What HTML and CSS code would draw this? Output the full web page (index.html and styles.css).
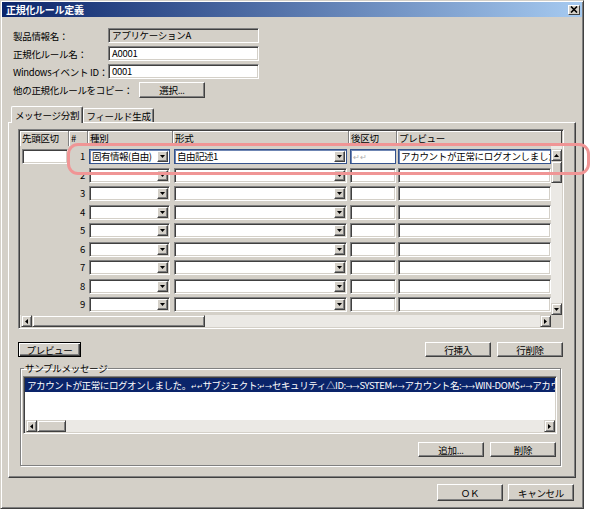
FILE: index.html
```html
<!DOCTYPE html>
<html lang="ja">
<head>
<meta charset="utf-8">
<title>正規化ルール定義</title>
<link rel="stylesheet" href="styles.css">
</head>
<body>
<div class="dialog">
  <div class="titlebar">
    <span class="title">正規化ルール定義</span>
    <span class="close-btn"><svg width="8" height="7" viewBox="0 0 8 7"><path d="M1 0.5l6 6M7 0.5l-6 6" stroke="#000" stroke-width="1.6" fill="none"/></svg></span>
  </div>
  <div class="content">
    <div class="form">
      <div class="frow"><span class="flabel">製品情報名：</span><div class="field sunken disabled">アプリケーションA</div></div>
      <div class="frow"><span class="flabel">正規化ルール名：</span><div class="field sunken">A0001</div></div>
      <div class="frow"><span class="flabel">Windowsイベント ID：</span><div class="field sunken">0001</div></div>
      <div class="frow"><span class="flabel wide">他の正規化ルールをコピー：</span><div class="btn sel-btn">選択...</div></div>
    </div>
    <div class="tabs">
      <div class="tab active">メッセージ分割</div>
      <div class="tab second">フィールド生成</div>
    </div>
    <div class="panel">
      <div class="grid-box sunken">
        <div class="grid-head">
          <div class="hcell">先頭区切</div>
          <div class="hcell">#</div>
          <div class="hcell">種別</div>
          <div class="hcell">形式</div>
          <div class="hcell">後区切</div>
          <div class="hcell last">プレビュー</div>
        </div>
        <div class="grid-main">
          <div class="rows">
            <div class="grow">
              <div class="c0"><div class="gin sunken w46"></div></div>
              <div class="num">1</div>
              <div class="c"><div class="combo sel w81"><span class="ctext">固有情報(自由)</span><span class="dd"><svg width="5" height="3" viewBox="0 0 5 3"><path d="M0 0h5L2.5 3z"/></svg></span></div></div>
              <div class="c"><div class="combo sel w173"><span class="ctext">自由記述1</span><span class="dd"><svg width="5" height="3" viewBox="0 0 5 3"><path d="M0 0h5L2.5 3z"/></svg></span></div></div>
              <div class="c"><div class="gin sel w46"><span class="ghost">↵↵</span></div></div>
              <div class="c"><div class="gin sel w153">アカウントが正常にログオンしました</div></div>
            </div>
            <div class="grow">
              <div class="c0"></div>
              <div class="num">2</div>
              <div class="c"><div class="combo sunken w81"><span class="ctext"></span><span class="dd"><svg width="5" height="3" viewBox="0 0 5 3"><path d="M0 0h5L2.5 3z"/></svg></span></div></div>
              <div class="c"><div class="combo sunken w173"><span class="ctext"></span><span class="dd"><svg width="5" height="3" viewBox="0 0 5 3"><path d="M0 0h5L2.5 3z"/></svg></span></div></div>
              <div class="c"><div class="gin sunken w46"></div></div>
              <div class="c"><div class="gin sunken w153"></div></div>
            </div>
            <div class="grow">
              <div class="c0"></div>
              <div class="num">3</div>
              <div class="c"><div class="combo sunken w81"><span class="ctext"></span><span class="dd"><svg width="5" height="3" viewBox="0 0 5 3"><path d="M0 0h5L2.5 3z"/></svg></span></div></div>
              <div class="c"><div class="combo sunken w173"><span class="ctext"></span><span class="dd"><svg width="5" height="3" viewBox="0 0 5 3"><path d="M0 0h5L2.5 3z"/></svg></span></div></div>
              <div class="c"><div class="gin sunken w46"></div></div>
              <div class="c"><div class="gin sunken w153"></div></div>
            </div>
            <div class="grow">
              <div class="c0"></div>
              <div class="num">4</div>
              <div class="c"><div class="combo sunken w81"><span class="ctext"></span><span class="dd"><svg width="5" height="3" viewBox="0 0 5 3"><path d="M0 0h5L2.5 3z"/></svg></span></div></div>
              <div class="c"><div class="combo sunken w173"><span class="ctext"></span><span class="dd"><svg width="5" height="3" viewBox="0 0 5 3"><path d="M0 0h5L2.5 3z"/></svg></span></div></div>
              <div class="c"><div class="gin sunken w46"></div></div>
              <div class="c"><div class="gin sunken w153"></div></div>
            </div>
            <div class="grow">
              <div class="c0"></div>
              <div class="num">5</div>
              <div class="c"><div class="combo sunken w81"><span class="ctext"></span><span class="dd"><svg width="5" height="3" viewBox="0 0 5 3"><path d="M0 0h5L2.5 3z"/></svg></span></div></div>
              <div class="c"><div class="combo sunken w173"><span class="ctext"></span><span class="dd"><svg width="5" height="3" viewBox="0 0 5 3"><path d="M0 0h5L2.5 3z"/></svg></span></div></div>
              <div class="c"><div class="gin sunken w46"></div></div>
              <div class="c"><div class="gin sunken w153"></div></div>
            </div>
            <div class="grow">
              <div class="c0"></div>
              <div class="num">6</div>
              <div class="c"><div class="combo sunken w81"><span class="ctext"></span><span class="dd"><svg width="5" height="3" viewBox="0 0 5 3"><path d="M0 0h5L2.5 3z"/></svg></span></div></div>
              <div class="c"><div class="combo sunken w173"><span class="ctext"></span><span class="dd"><svg width="5" height="3" viewBox="0 0 5 3"><path d="M0 0h5L2.5 3z"/></svg></span></div></div>
              <div class="c"><div class="gin sunken w46"></div></div>
              <div class="c"><div class="gin sunken w153"></div></div>
            </div>
            <div class="grow">
              <div class="c0"></div>
              <div class="num">7</div>
              <div class="c"><div class="combo sunken w81"><span class="ctext"></span><span class="dd"><svg width="5" height="3" viewBox="0 0 5 3"><path d="M0 0h5L2.5 3z"/></svg></span></div></div>
              <div class="c"><div class="combo sunken w173"><span class="ctext"></span><span class="dd"><svg width="5" height="3" viewBox="0 0 5 3"><path d="M0 0h5L2.5 3z"/></svg></span></div></div>
              <div class="c"><div class="gin sunken w46"></div></div>
              <div class="c"><div class="gin sunken w153"></div></div>
            </div>
            <div class="grow">
              <div class="c0"></div>
              <div class="num">8</div>
              <div class="c"><div class="combo sunken w81"><span class="ctext"></span><span class="dd"><svg width="5" height="3" viewBox="0 0 5 3"><path d="M0 0h5L2.5 3z"/></svg></span></div></div>
              <div class="c"><div class="combo sunken w173"><span class="ctext"></span><span class="dd"><svg width="5" height="3" viewBox="0 0 5 3"><path d="M0 0h5L2.5 3z"/></svg></span></div></div>
              <div class="c"><div class="gin sunken w46"></div></div>
              <div class="c"><div class="gin sunken w153"></div></div>
            </div>
            <div class="grow">
              <div class="c0"></div>
              <div class="num">9</div>
              <div class="c"><div class="combo sunken w81"><span class="ctext"></span><span class="dd"><svg width="5" height="3" viewBox="0 0 5 3"><path d="M0 0h5L2.5 3z"/></svg></span></div></div>
              <div class="c"><div class="combo sunken w173"><span class="ctext"></span><span class="dd"><svg width="5" height="3" viewBox="0 0 5 3"><path d="M0 0h5L2.5 3z"/></svg></span></div></div>
              <div class="c"><div class="gin sunken w46"></div></div>
              <div class="c"><div class="gin sunken w153"></div></div>
            </div>
          </div>
          <div class="vscroll">
            <div class="sbtn"><svg width="5" height="3" viewBox="0 0 5 3"><path d="M2.5 0L5 3H0z"/></svg></div>
            <div class="vthumb"></div>
            <div class="track"></div>
            <div class="sbtn"><svg width="5" height="3" viewBox="0 0 5 3"><path d="M0 0h5L2.5 3z"/></svg></div>
          </div>
        </div>
        <div class="hbar">
          <div class="hscroll">
            <div class="sbtn"><svg width="3" height="5" viewBox="0 0 3 5"><path d="M3 0v5L0 2.5z"/></svg></div>
            <div class="hthumb"></div>
            <div class="track"></div>
            <div class="sbtn"><svg width="3" height="5" viewBox="0 0 3 5"><path d="M0 0l3 2.5L0 5z"/></svg></div>
          </div>
          <div class="corner"></div>
        </div>
      </div>

      <div class="btnrow">
        <div class="btn default w63">プレビュー</div>
        <div class="btngroup">
          <div class="btn w66">行挿入</div>
          <div class="btn w66">行削除</div>
        </div>
      </div>

      <fieldset class="group">
        <legend>サンプルメッセージ</legend>
        <div class="listbox sunken">
          <div class="item">アカウントが正常にログオンしました。<span class="sym">↵↵</span>サブジェクト:<span class="sym">↵→</span>セキュリティ△ID:<span class="sym">→→</span>SYSTEM<span class="sym">↵→</span>アカウント名:<span class="sym">→→</span>WIN-DOM$<span class="sym">↵→</span>アカウント</div>
          <div class="lb-blank"></div>
          <div class="lb-hscroll">
            <div class="sbtn"><svg width="3" height="5" viewBox="0 0 3 5"><path d="M3 0v5L0 2.5z"/></svg></div>
            <div class="lthumb"></div>
            <div class="track"></div>
            <div class="sbtn"><svg width="3" height="5" viewBox="0 0 3 5"><path d="M0 0l3 2.5L0 5z"/></svg></div>
          </div>
        </div>
        <div class="btngroup right">
          <div class="btn w66">追加...</div>
          <div class="btn w66">削除</div>
        </div>
      </fieldset>
    </div>
    <div class="footer">
      <div class="btn w66 tall">ＯＫ</div>
      <div class="btn w66 tall">キャンセル</div>
    </div>
  </div>
</div>
<div class="highlight"></div>
</body>
</html>
```

FILE: styles.css
```css
* { box-sizing: border-box; }
html, body { margin: 0; padding: 0; }
body {
  width: 595px;
  height: 512px;
  background: #fff;
  font-family: "Noto Sans CJK JP", "Liberation Sans", sans-serif;
  font-size: 9.5px;
  letter-spacing: -0.3px;
  color: #000;
  position: relative;
  overflow: hidden;
}

.dialog {
  width: 584px;
  height: 509px;
  background: #d4d0c8;
  border: 1px solid;
  border-color: #d4d0c8 #404040 #404040 #d4d0c8;
  box-shadow: inset 1px 1px #fff, inset -1px -1px #808080;
  padding: 1px;
  display: flex;
  flex-direction: column;
}

.titlebar {
  height: 15px;
  flex: none;
  background: linear-gradient(to right, #0a246a, #a6caf0);
  display: flex;
  align-items: center;
  justify-content: space-between;
  padding: 0 2px 0 4px;
}
.title { color: #fff; font-weight: bold; font-size: 10px; letter-spacing: -0.3px; }
.close-btn {
  width: 12px;
  height: 10px;
  background: #d4d0c8;
  border: 1px solid;
  border-color: #fff #404040 #404040 #fff;
  display: flex;
  align-items: center;
  justify-content: center;
}

.sunken {
  border: 1px solid;
  border-color: #808080 #fff #fff #808080;
  box-shadow: inset 1px 1px #404040, inset -1px -1px #d4d0c8;
}

.content { padding: 11px 0 0 6px; }

.form { padding-left: 5px; display: flex; flex-direction: column; gap: 3px; }
.frow { display: flex; align-items: center; height: 15px; }
.flabel { width: 95px; white-space: nowrap; }
.flabel.wide { width: 126px; }
.field {
  width: 151px;
  height: 15px;
  background: #fff;
  padding: 0 3px;
  line-height: 13px;
  white-space: nowrap;
}
.field.disabled { background: #d4d0c8; }

.btn {
  height: 15px;
  background: #d4d0c8;
  border: 1px solid;
  border-color: #fff #404040 #404040 #fff;
  box-shadow: inset -1px -1px #808080;
  display: flex;
  align-items: center;
  justify-content: center;
  white-space: nowrap;
}
.btn.default {
  border-color: #000;
  box-shadow: inset 1px 1px #fff, inset -1px -1px #404040, inset -2px -2px #808080;
}
.sel-btn { width: 66px; height: 16px; }
.w63 { width: 63px; }
.w66 { width: 66px; }
.tall { height: 17px; }

.tabs {
  margin-top: 9px;
  height: 16px;
  display: flex;
  align-items: flex-end;
  padding-left: 3px;
  position: relative;
  z-index: 1;
}
.tab {
  height: 14px;
  background: #d4d0c8;
  border: 1px solid;
  border-color: #fff #404040 transparent #fff;
  border-bottom: none;
  box-shadow: inset -1px 0 #808080;
  display: flex;
  align-items: center;
  justify-content: center;
  width: 71px;
  border-radius: 2px 2px 0 0;
}
.tab.active { height: 17px; width: 72px; margin-bottom: -1px; }

.panel {
  width: 568px;
  height: 356px;
  border: 1px solid;
  border-color: #fff #404040 #404040 #fff;
  box-shadow: inset -1px -1px #808080;
  padding: 6px 0 0 9px;
}

.grid-box {
  width: 546px;
  height: 200px;
  padding: 1px;
  display: flex;
  flex-direction: column;
}
.grid-head {
  height: 15px;
  flex: none;
  display: grid;
  grid-template-columns: 49px 19px 85px 176px 48px 165px;
}
.hcell {
  border-right: 1px solid #808080;
  box-shadow: inset 1px 1px #fff;
  padding-left: 2px;
  line-height: 14px;
  white-space: nowrap;
  overflow: hidden;
}
.hcell.last { border-right: 1px solid #404040; }

.grid-main { height: 169px; flex: none; display: flex; overflow: hidden; }
.rows { width: 531px; padding-top: 2px; }
.grow {
  height: 18.5px;
  display: grid;
  grid-template-columns: 49px 19px 85px 176px 48px 154px;
  align-items: start;
}
.grow > div { padding-top: 1px; }
.c0 { padding-left: 2px; }
.c { padding-left: 1px; }
.num { text-align: right; padding-right: 3px; line-height: 15px; }

.gin {
  height: 15px;
  background: #fff;
  padding: 0 2px;
  line-height: 13px;
  white-space: nowrap;
  overflow: hidden;
}
.w46 { width: 46px; }
.w81 { width: 81px; }
.w153 { width: 153px; }
.w173 { width: 173px; }

.combo {
  height: 15px;
  background: #fff;
  display: flex;
  align-items: center;
  padding: 0 1px 0 2px;
}
.sel {
  border: 1px solid #34528c;
  box-shadow: inset 1px 1px #6f86b3;
}
.ctext { flex: 1; min-width: 0; white-space: nowrap; line-height: 13px; letter-spacing: -0.5px; }
.dd {
  width: 11px;
  height: 11px;
  flex: none;
  background: #d4d0c8;
  border: 1px solid;
  border-color: #fff #404040 #404040 #fff;
  box-shadow: inset -1px -1px #808080;
  display: flex;
  align-items: center;
  justify-content: center;
}
.ghost { color: #b0b0b0; font-size: 8px; }

.vscroll {
  width: 11px;
  display: flex;
  flex-direction: column;
  padding-top: 3px;
  background: #ebe9e5;
}
.sbtn {
  width: 11px;
  height: 12px;
  flex: none;
  background: #d4d0c8;
  border: 1px solid;
  border-color: #d4d0c8 #404040 #404040 #d4d0c8;
  box-shadow: inset 1px 1px #fff, inset -1px -1px #808080;
  display: flex;
  align-items: center;
  justify-content: center;
}
.track { flex: 1; background: #ebe9e5; }
.vthumb, .hthumb, .lthumb {
  flex: none;
  background: #d4d0c8;
  border: 1px solid;
  border-color: #d4d0c8 #404040 #404040 #d4d0c8;
  box-shadow: inset 1px 1px #fff, inset -1px -1px #808080;
}
.vthumb { height: 22px; }
.hbar { height: 12px; flex: none; display: flex; }
.hscroll { width: 531px; display: flex; background: #ebe9e5; padding-left: 1px; }
.hthumb { width: 173px; }
.corner { flex: 1; background: #d4d0c8; }

.btnrow {
  width: 546px;
  margin-top: 13px;
  display: flex;
  justify-content: space-between;
  padding-right: 1px;
}
.btngroup { display: flex; gap: 6px; }
.btngroup.right { justify-content: flex-end; margin-top: 8px; padding-right: 1px; }

.group {
  margin: 5px 0 0 2px;
  width: 541px;
  height: 104px;
  padding: 0 3px 0 2px;
  border: 1px solid #808080;
  box-shadow: inset 1px 1px #fff, 1px 1px #fff;
}
.group legend {
  padding: 0 1px;
  margin-left: 1px;
  line-height: 12px;
}
.listbox {
  width: 534px;
  height: 58px;
  margin-top: 2px;
  padding: 1px;
  background: #fff;
  display: flex;
  flex-direction: column;
}
.item {
  height: 14px;
  flex: none;
  background: #0a246a;
  color: #fff;
  line-height: 14px;
  padding-left: 2px;
  white-space: nowrap;
  overflow: hidden;
  letter-spacing: -0.4px;
}
.sym { font-size: 7px; letter-spacing: -0.2px; }
.lb-blank { flex: 1; background: #fff; }
.lb-hscroll { height: 12px; flex: none; display: flex; background: #ebe9e5; padding-left: 1px; }
.lthumb { width: 29px; }

.footer {
  width: 568px;
  margin-top: 6px;
  display: flex;
  justify-content: flex-end;
  gap: 5px;
  padding-right: 2px;
}

.highlight {
  position: absolute;
  left: 67px;
  top: 143px;
  width: 523px;
  height: 32px;
  border: 3px solid #f09595;
  border-radius: 11px;
  pointer-events: none;
}
```
